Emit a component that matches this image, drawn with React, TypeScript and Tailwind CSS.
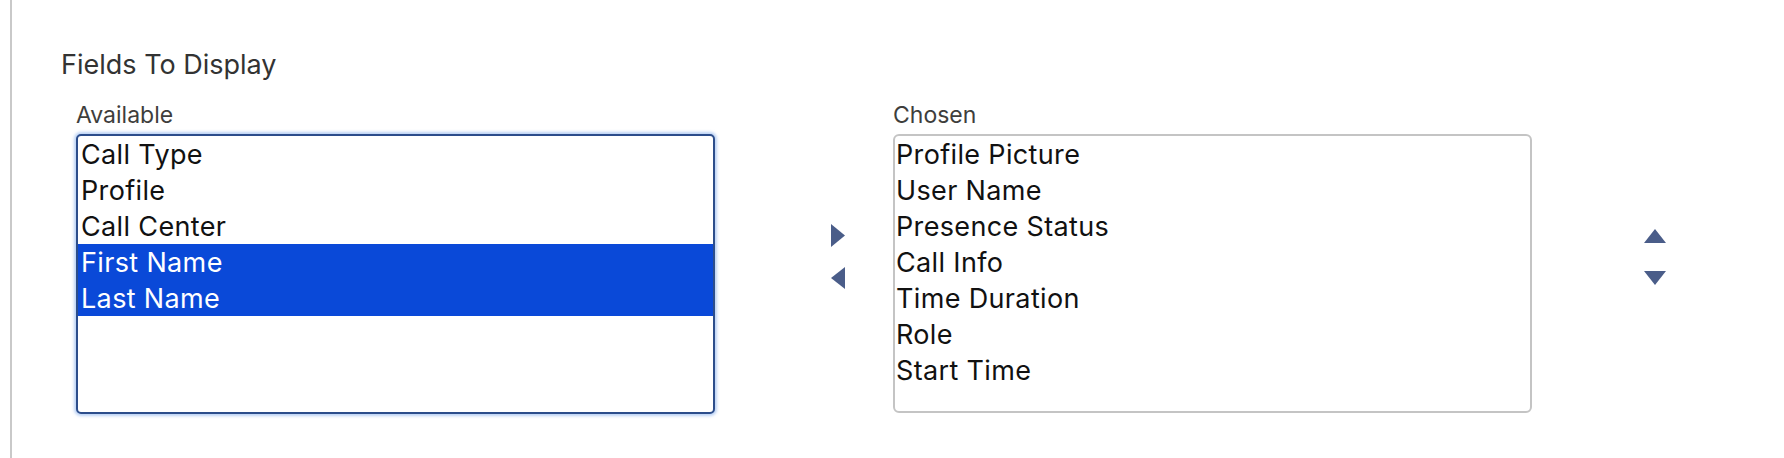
import { useState } from 'react';

const available = ['Call Type', 'Profile', 'Call Center', 'First Name', 'Last Name'];
const chosen = ['Profile Picture', 'User Name', 'Presence Status', 'Call Info', 'Time Duration', 'Role', 'Start Time'];

const ArrowRight = () => (
  <svg width="14" height="23" viewBox="0 0 14 23" className="block">
    <path d="M0 0 L14 11.5 L0 23 Z" fill="#4a5d89" />
  </svg>
);

const ArrowLeft = () => (
  <svg width="14" height="22" viewBox="0 0 14 22" className="block">
    <path d="M14 0 L0 11 L14 22 Z" fill="#4a5d89" />
  </svg>
);

const ArrowUp = () => (
  <svg width="22" height="14" viewBox="0 0 22 14" className="block">
    <path d="M0 14 L11 0 L22 14 Z" fill="#4a5d89" />
  </svg>
);

const ArrowDown = () => (
  <svg width="22" height="14" viewBox="0 0 22 14" className="block">
    <path d="M0 0 L22 0 L11 14 Z" fill="#4a5d89" />
  </svg>
);

const App = () => {
  const [selected] = useState<string[]>(['First Name', 'Last Name']);

  return (
    <div className="flex h-[458px] w-full bg-white font-['Inter',sans-serif]">
      <div className="ml-[10px] h-full w-[2px] bg-[#c9c9c9]" />

      <div className="pl-[49px] pt-[49px]">
        <h2 className="text-[27px] leading-[32px] text-[#333333]">Fields To Display</h2>

        <div className="mt-[21px] flex items-start pl-[15px]">
          {/* Available */}
          <div>
            <div className="mb-[6px] text-[23px] leading-[26px] text-[#3e3e3c]">Available</div>
            <div className="h-[280px] w-[639px] overflow-hidden rounded-[5px] border-2 border-[#2c4d8b] bg-white shadow-[0_0_3px_2px_rgba(120,165,235,0.5)]">
              {available.map((item) => {
                const isSel = selected.includes(item);
                return (
                  <div
                    key={item}
                    className={`h-[36px] overflow-hidden pl-[3px] text-[27px] leading-[38px] tracking-[0.35px] ${isSel ? 'bg-[#0a49d8] text-white' : 'text-[#111111]'}`}
                  >
                    {item}
                  </div>
                );
              })}
            </div>
          </div>

          {/* move buttons */}
          <div className="ml-[116px] flex flex-col gap-[20px] pt-[122px]">
            <ArrowRight />
            <ArrowLeft />
          </div>

          {/* Chosen */}
          <div className="ml-[48px]">
            <div className="mb-[6px] text-[23px] leading-[26px] text-[#3e3e3c]">Chosen</div>
            <div className="h-[279px] w-[639px] overflow-hidden rounded-[6px] border-2 border-[#c4c4c4] bg-white">
              {chosen.map((item) => (
                <div key={item} className="h-[36px] overflow-hidden pl-[1px] text-[27px] leading-[38px] tracking-[0.35px] text-[#111111]">
                  {item}
                </div>
              ))}
            </div>
          </div>

          {/* order buttons */}
          <div className="ml-[112px] flex flex-col gap-[28px] pt-[127px]">
            <ArrowUp />
            <ArrowDown />
          </div>
        </div>
      </div>
    </div>
  );
};

export default App;
